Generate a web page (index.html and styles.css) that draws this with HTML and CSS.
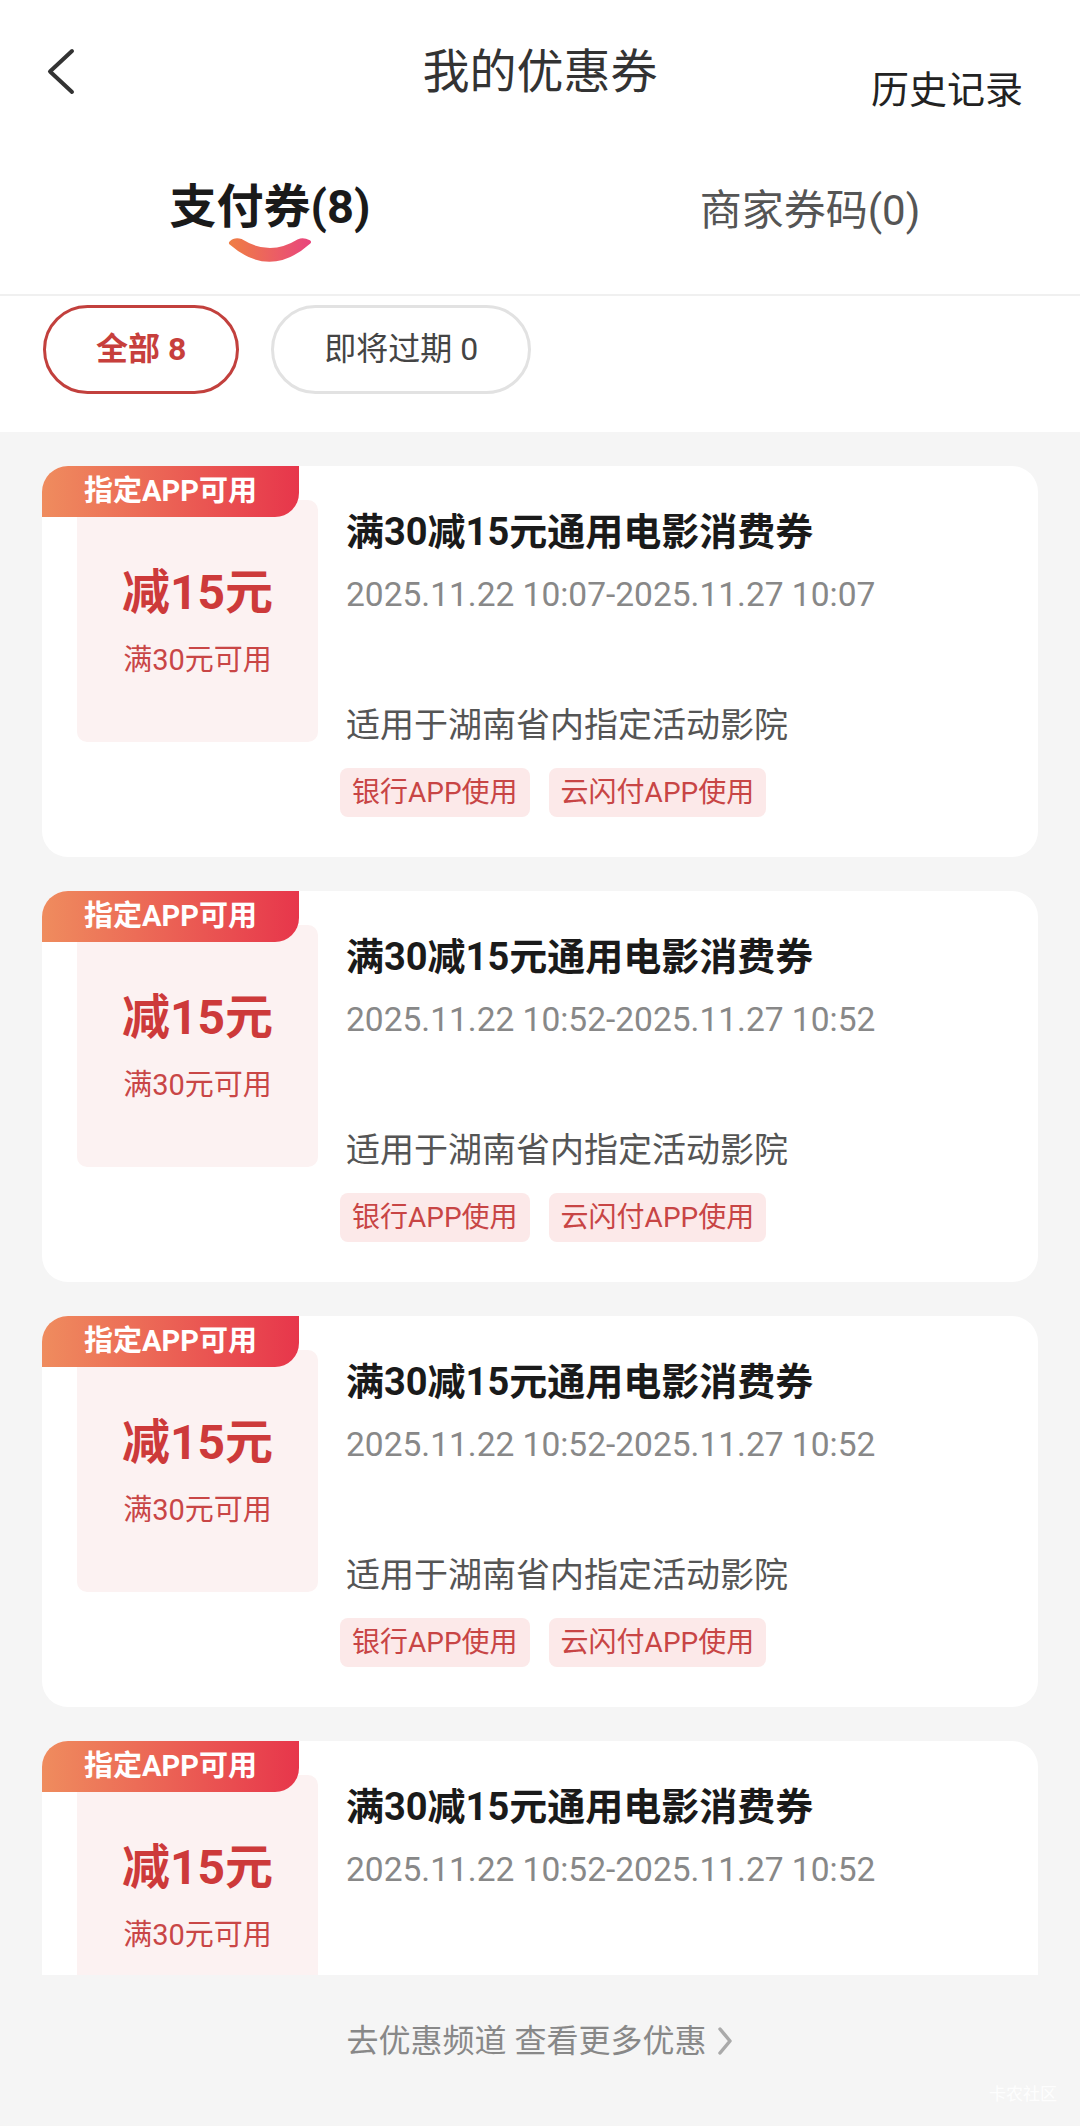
FILE: index.html
```html
<!DOCTYPE html>
<html lang="zh-CN">
<head>
    <meta charset="UTF-8">
    <meta name="viewport" content="width=device-width, initial-scale=1.0">
    <title>我的优惠券</title>
    <link rel="stylesheet" href="styles.css">
</head>
<body>

    <header class="top-bar">
        <a class="back" href="#">
            <svg width="30" height="50" viewBox="0 0 30 50">
                <path d="M26 4 L4 24.5 L26 45" fill="none" stroke="#333" stroke-width="4" stroke-linecap="round" stroke-linejoin="round"/>
            </svg>
        </a>
        <h1 class="page-title">我的优惠券</h1>
        <a class="history" href="#">历史记录</a>
    </header>

    <nav class="tabs">
        <div class="tab tab--active">
            <span class="tab-text">支付券(8)</span>
            <svg class="tab-line" width="86" height="26" viewBox="0 0 86 26">
                <defs>
                    <linearGradient id="tabGrad" x1="0" y1="0" x2="1" y2="0">
                        <stop offset="0" stop-color="#ef7d45"/>
                        <stop offset="1" stop-color="#e9467c"/>
                    </linearGradient>
                </defs>
                <path d="M4 6 Q43 40 82 5 Q76 2 72 4 Q43 22 14 4 Q8 2 4 6 Z" fill="url(#tabGrad)" stroke="url(#tabGrad)" stroke-width="4" stroke-linejoin="round"/>
            </svg>
        </div>
        <div class="tab">
            <span class="tab-text">商家券码(0)</span>
        </div>
    </nav>

    <div class="filters">
        <span class="chip chip--active">全部 8</span>
        <span class="chip">即将过期 0</span>
    </div>

    <main class="coupon-list">
        <div class="coupon">
            <span class="coupon-badge">指定APP可用</span>
            <div class="coupon-amount">
                <div class="amount-main">减15元</div>
                <div class="amount-rule">满30元可用</div>
            </div>
            <div class="coupon-info">
                <div class="coupon-title">满30减15元通用电影消费券</div>
                <div class="coupon-date">2025.11.22 10:07-2025.11.27 10:07</div>
                <div class="coupon-scope">适用于湖南省内指定活动影院</div>
                <div class="coupon-tags">
                    <span class="tag">银行APP使用</span>
                    <span class="tag">云闪付APP使用</span>
                </div>
            </div>
        </div>

        <div class="coupon">
            <span class="coupon-badge">指定APP可用</span>
            <div class="coupon-amount">
                <div class="amount-main">减15元</div>
                <div class="amount-rule">满30元可用</div>
            </div>
            <div class="coupon-info">
                <div class="coupon-title">满30减15元通用电影消费券</div>
                <div class="coupon-date">2025.11.22 10:52-2025.11.27 10:52</div>
                <div class="coupon-scope">适用于湖南省内指定活动影院</div>
                <div class="coupon-tags">
                    <span class="tag">银行APP使用</span>
                    <span class="tag">云闪付APP使用</span>
                </div>
            </div>
        </div>

        <div class="coupon">
            <span class="coupon-badge">指定APP可用</span>
            <div class="coupon-amount">
                <div class="amount-main">减15元</div>
                <div class="amount-rule">满30元可用</div>
            </div>
            <div class="coupon-info">
                <div class="coupon-title">满30减15元通用电影消费券</div>
                <div class="coupon-date">2025.11.22 10:52-2025.11.27 10:52</div>
                <div class="coupon-scope">适用于湖南省内指定活动影院</div>
                <div class="coupon-tags">
                    <span class="tag">银行APP使用</span>
                    <span class="tag">云闪付APP使用</span>
                </div>
            </div>
        </div>

        <div class="coupon">
            <span class="coupon-badge">指定APP可用</span>
            <div class="coupon-amount">
                <div class="amount-main">减15元</div>
                <div class="amount-rule">满30元可用</div>
            </div>
            <div class="coupon-info">
                <div class="coupon-title">满30减15元通用电影消费券</div>
                <div class="coupon-date">2025.11.22 10:52-2025.11.27 10:52</div>
                <div class="coupon-scope">适用于湖南省内指定活动影院</div>
                <div class="coupon-tags">
                    <span class="tag">银行APP使用</span>
                    <span class="tag">云闪付APP使用</span>
                </div>
            </div>
        </div>
    </main>

    <footer class="more">
        <span>去优惠频道 查看更多优惠</span>
        <svg width="16" height="28" viewBox="0 0 16 28">
            <path d="M3 2 L13 14 L3 26" fill="none" stroke="#aaa" stroke-width="3.5" stroke-linecap="round" stroke-linejoin="round"/>
        </svg>
    </footer>

    <div class="watermark">卡农社区</div>

</body>
</html>
```

FILE: styles.css
```css
* {
    box-sizing: border-box;
}

body {
    margin: 0;
    width: 1080px;
    position: relative;
    background-color: #fff;
    font-family: Roboto, "Noto Sans CJK SC", sans-serif;
    color: #333;
}

a {
    color: inherit;
    text-decoration: none;
}

/* header */
.top-bar {
    height: 144px;
    display: grid;
    grid-template-columns: 1fr auto 1fr;
    align-items: center;
}

.back {
    display: flex;
    padding-left: 46px;
}

.page-title {
    margin: 0;
    font-size: 47px;
    font-weight: normal;
    line-height: 56px;
    color: #333;
}

.history {
    justify-self: end;
    padding-right: 57px;
    margin-top: 36px;
    font-size: 38px;
    line-height: 48px;
    color: #222;
}

/* tabs */
.tabs {
    height: 152px;
    display: flex;
    align-items: flex-start;
    border-bottom: 2px solid #f0f0f0;
}

.tab {
    flex: 1;
    display: flex;
    flex-direction: column;
    align-items: center;
}

.tab-text {
    padding-top: 39px;
    font-size: 42px;
    line-height: 56px;
    color: #555;
}

.tab--active .tab-text {
    padding-top: 35px;
    font-size: 47px;
    font-weight: bold;
    color: #1a1a1a;
}

.tab-line {
    margin-top: 2px;
}

/* filter chips */
.filters {
    display: flex;
    gap: 32px;
    padding: 9px 0 38px 43px;
}

.chip {
    height: 89px;
    padding: 0 50px;
    border: 3px solid #e2e2e2;
    border-radius: 45px;
    font-size: 32px;
    line-height: 83px;
    color: #444;
}

.chip--active {
    border-color: #c2403d;
    color: #c73f3c;
    font-weight: bold;
}

/* coupon list */
.coupon-list {
    height: 1543px;
    overflow: hidden;
    display: flex;
    flex-direction: column;
    gap: 34px;
    padding: 34px 42px 0;
    background-color: #f5f5f5;
}

.coupon {
    position: relative;
    flex-shrink: 0;
    display: grid;
    grid-template-columns: 241px 1fr;
    column-gap: 28px;
    padding: 34px 40px 40px 35px;
    background-color: #fff;
    border-radius: 26px;
}

.coupon-badge {
    position: absolute;
    top: 0;
    left: 0;
    z-index: 1;
    width: 257px;
    height: 51px;
    border-radius: 26px 0 24px 0;
    background: linear-gradient(90deg, #ef8c5e, #e7364b);
    color: #fff;
    font-size: 29px;
    font-weight: bold;
    line-height: 51px;
    text-align: center;
}

.coupon-amount {
    height: 242px;
    display: flex;
    flex-direction: column;
    align-items: center;
    justify-content: center;
    background-color: #fcf2f2;
    border-radius: 10px;
}

.amount-main {
    font-size: 48px;
    font-weight: bold;
    line-height: 56px;
    color: #cd3a3a;
}

.amount-rule {
    margin-top: 21px;
    font-size: 29px;
    line-height: 36px;
    color: #c94646;
}

.coupon-title {
    margin-top: 8px;
    font-size: 38px;
    font-weight: bold;
    line-height: 48px;
    color: #1a1a1a;
}

.coupon-date {
    margin-top: 17px;
    font-size: 33.5px;
    line-height: 44px;
    color: #888;
}

.coupon-scope {
    margin-top: 86px;
    font-size: 34px;
    line-height: 44px;
    color: #555;
}

.coupon-tags {
    display: flex;
    gap: 19px;
    margin-top: 21px;
    margin-left: -6px;
}

.tag {
    height: 49px;
    padding: 0 12px;
    border-radius: 8px;
    background-color: #fce9e9;
    color: #c84545;
    font-size: 28px;
    line-height: 49px;
}

/* footer */
.more {
    height: 151px;
    display: flex;
    justify-content: center;
    align-items: flex-start;
    gap: 11px;
    padding-top: 44px;
    background-color: #f5f5f5;
    font-size: 32px;
    line-height: 44px;
    color: #888;
}

.more svg {
    margin-top: 8px;
}

.watermark {
    position: absolute;
    right: 23px;
    bottom: 21px;
    font-size: 17px;
    color: rgba(255, 255, 255, 0.9);
}
```
